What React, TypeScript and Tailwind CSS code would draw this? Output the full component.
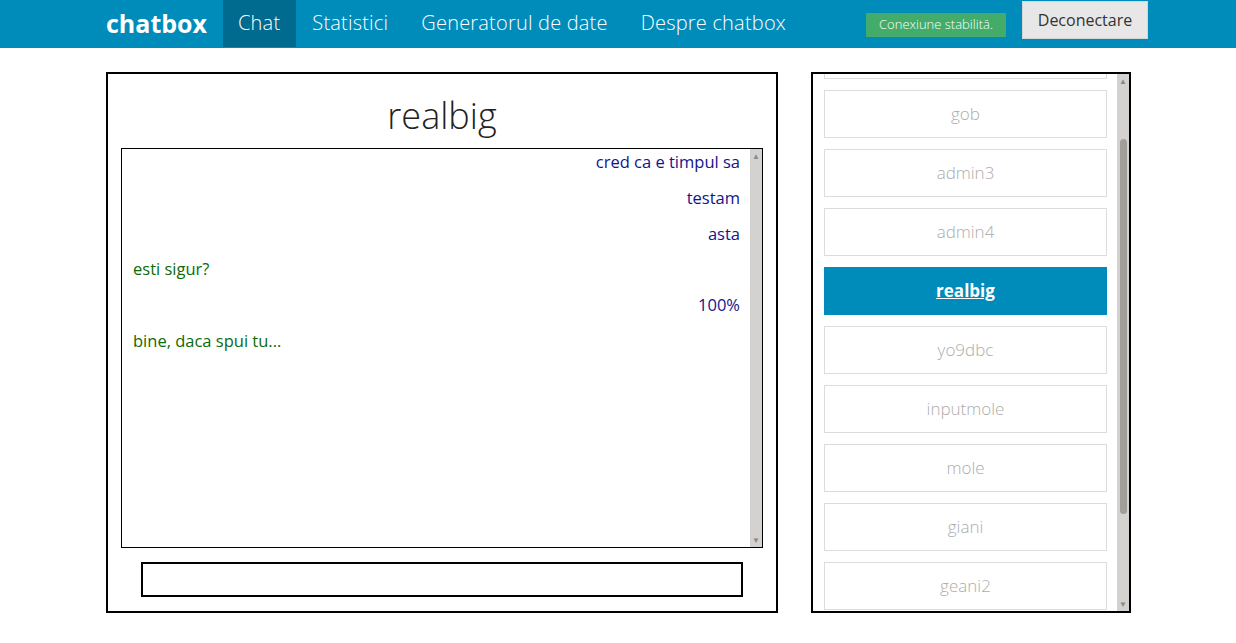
import React from "react";

const messages = [
  { text: "cred ca e timpul sa", mine: true },
  { text: "testam", mine: true },
  { text: "asta", mine: true },
  { text: "esti sigur?", mine: false },
  { text: "100%", mine: true },
  { text: "bine, daca spui tu...", mine: false },
];

const users = ["", "gob", "admin3", "admin4", "realbig", "yo9dbc", "inputmole", "mole", "giani", "geani2"];

function ScrollTrack({ thumb }: { thumb?: boolean }) {
  return (
    <div className="w-[12px] h-full bg-[#d4d2d0] flex flex-col items-center justify-between py-[3px] text-[8px] leading-none text-[#8a8a8a]">
      <span>▲</span>
      {thumb && <div className="w-[7px] flex-1 mt-[54px] mb-[86px] rounded-full bg-[#a19e9a]" />}
      <span>▼</span>
    </div>
  );
}

export default function App() {
  return (
    <div className="min-h-screen bg-white font-['Open_Sans',sans-serif] text-[#222]">
      {/* top bar */}
      <header className="h-[48px] bg-[#008cba] flex">
        <div className="ml-[106px] w-[1042px] flex items-start">
          <div className="h-[47px] flex items-center pr-[16px] text-[25px] font-bold text-white">chatbox</div>
          <nav className="flex h-[47px] text-[20px] font-light text-white tracking-[0.2px]">
            <a className="pl-[15px] pr-[16px] pb-[2px] flex items-center bg-[#006a8f]">Chat</a>
            <a className="px-[16px] pb-[2px] flex items-center">Statistici</a>
            <a className="px-[17px] pb-[2px] flex items-center">Generatorul de date</a>
            <a className="px-[16px] pb-[2px] flex items-center">Despre chatbox</a>
          </nav>
          <div className="ml-auto flex items-start gap-[16px]">
            <span className="mt-[13px] h-[24px] w-[140px] flex items-center justify-center bg-[#43ac6a] text-[13px] text-white font-light">
              Conexiune stabilită.
            </span>
            <button className="mt-[1px] h-[38px] w-[126px] bg-[#e7e7e7] border border-[#d6d6d6] text-[16px] text-[#333]">
              Deconectare
            </button>
          </div>
        </div>
      </header>

      <main className="ml-[106px] mt-[24px] flex gap-[33px]">
        {/* chat panel */}
        <section className="w-[672px] h-[541px] border-2 border-black flex flex-col px-[13px]">
          <h1 className="h-[74px] pt-[18px] text-center text-[36px] font-light leading-[48px] text-[#222]">realbig</h1>
          <div className="h-[400px] border border-black flex">
            <div className="flex-1 flex flex-col pl-[11px] pr-[10px] -mt-[5px] text-[16.5px] leading-[35.8px]">
              {messages.map((m, i) => (
                <div key={i} className={m.mine ? "text-right text-[#14148a]" : "text-left text-[#0b6b0b]"}>
                  {m.text}
                </div>
              ))}
            </div>
            <ScrollTrack />
          </div>
          <div className="mt-[14px] flex justify-center">
            <input className="w-[602px] h-[35px] border-2 border-black outline-none px-2" />
          </div>
        </section>

        {/* users panel */}
        <aside className="w-[320px] h-[541px] border-2 border-black flex overflow-hidden">
          <div className="flex-1 overflow-hidden pl-[11px] pr-[10px]">
            <div className="-mt-[43px] flex flex-col gap-[11px]">
              {users.map((u, i) =>
                u === "realbig" ? (
                  <div key={i} className="h-[48px] flex items-center justify-center bg-[#008cba] text-white text-[17px] font-bold underline">
                    {u}
                  </div>
                ) : (
                  <div key={i} className="h-[48px] flex items-center justify-center border border-[#dcdcdc] text-[17px] font-light text-[#acacac]">
                    {u}
                  </div>
                )
              )}
            </div>
          </div>
          <div className="w-[12px]">
            <ScrollTrack thumb />
          </div>
        </aside>
      </main>
    </div>
  );
}
